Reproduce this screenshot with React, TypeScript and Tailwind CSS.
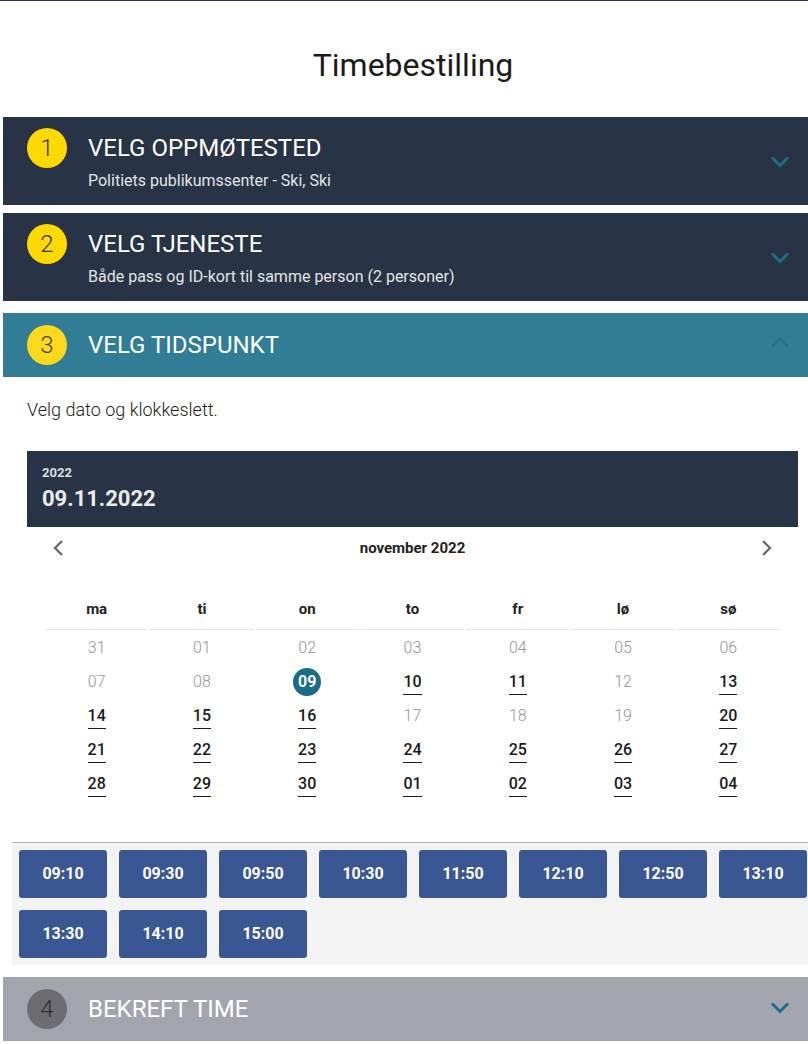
import React from "react";

type Cell = { d: string; s: "g" | "a" | "sel" };

const rows: Cell[][] = [
  [
    { d: "31", s: "g" },
    { d: "01", s: "g" },
    { d: "02", s: "g" },
    { d: "03", s: "g" },
    { d: "04", s: "g" },
    { d: "05", s: "g" },
    { d: "06", s: "g" },
  ],
  [
    { d: "07", s: "g" },
    { d: "08", s: "g" },
    { d: "09", s: "sel" },
    { d: "10", s: "a" },
    { d: "11", s: "a" },
    { d: "12", s: "g" },
    { d: "13", s: "a" },
  ],
  [
    { d: "14", s: "a" },
    { d: "15", s: "a" },
    { d: "16", s: "a" },
    { d: "17", s: "g" },
    { d: "18", s: "g" },
    { d: "19", s: "g" },
    { d: "20", s: "a" },
  ],
  [
    { d: "21", s: "a" },
    { d: "22", s: "a" },
    { d: "23", s: "a" },
    { d: "24", s: "a" },
    { d: "25", s: "a" },
    { d: "26", s: "a" },
    { d: "27", s: "a" },
  ],
  [
    { d: "28", s: "a" },
    { d: "29", s: "a" },
    { d: "30", s: "a" },
    { d: "01", s: "a" },
    { d: "02", s: "a" },
    { d: "03", s: "a" },
    { d: "04", s: "a" },
  ],
];

const days = ["ma", "ti", "on", "to", "fr", "lø", "sø"];
const times = ["09:10", "09:30", "09:50", "10:30", "11:50", "12:10", "12:50", "13:10", "13:30", "14:10", "15:00"];

function Chevron({ up, color }: { up?: boolean; color: string }) {
  return (
    <svg width="20" height="12" viewBox="0 0 20 12" fill="none">
      <polyline
        points={up ? "2,10.5 10,2.5 18,10.5" : "2,1.5 10,9.5 18,1.5"}
        stroke={color}
        strokeWidth="3"
        fill="none"
      />
    </svg>
  );
}

function Circle({ n, bg, fg }: { n: string; bg: string; fg: string }) {
  return (
    <div
      className={`w-[40px] h-[40px] rounded-full flex items-center justify-center text-[24px] font-light shrink-0 ${bg} ${fg}`}
    >
      {n}
    </div>
  );
}

export default function App() {
  return (
    <div
      className="min-h-[1044px] bg-white border-t border-[#2e3044] overflow-hidden"
      style={{ fontFamily: "Roboto, 'Liberation Sans', sans-serif" }}
    >
      <h1 className="text-center text-[32px] leading-[40px] text-[#1a1a1a] font-normal pt-[44px] mb-[32px] pl-[18px]">
        Timebestilling
      </h1>

      <div className="pl-[3px]">
        {/* Panel 1 */}
        <div className="h-[88px] bg-[#283345] flex items-start pl-[24px] pr-[18px] pt-[11px]">
          <Circle n="1" bg="bg-[#fdd900]" fg="text-[#333]" />
          <div className="ml-[21px] flex-1">
            <div className="text-white text-[24px] leading-[40px]">VELG OPPMØTESTED</div>
            <div className="text-[#e4e4e4] text-[16px] leading-[24px] mt-[1px]">
              Politiets publikumssenter - Ski, Ski
            </div>
          </div>
          <div className="self-center -mt-[10px]">
            <Chevron color="#1c6e8e" />
          </div>
        </div>

        {/* Panel 2 */}
        <div className="mt-[8px] h-[88px] bg-[#283345] flex items-start pl-[24px] pr-[18px] pt-[11px]">
          <Circle n="2" bg="bg-[#fdd900]" fg="text-[#333]" />
          <div className="ml-[21px] flex-1">
            <div className="text-white text-[24px] leading-[40px]">VELG TJENESTE</div>
            <div className="text-[#e4e4e4] text-[16px] leading-[24px] mt-[1px]">
              Både pass og ID-kort til samme person (2 personer)
            </div>
          </div>
          <div className="self-center -mt-[10px]">
            <Chevron color="#1c6e8e" />
          </div>
        </div>

        {/* Panel 3 */}
        <div className="mt-[12px] h-[64px] bg-[#327d96] flex items-center pl-[24px] pr-[18px]">
          <Circle n="3" bg="bg-[#fbd81c]" fg="text-[#444]" />
          <div className="ml-[21px] flex-1 text-white text-[24px] leading-[40px]">VELG TIDSPUNKT</div>
          <div className="-mt-[6px]">
            <Chevron up color="#27708c" />
          </div>
        </div>

        {/* Content */}
        <div className="pl-[24px] pr-[10px]">
          <p className="mt-[21px] text-[18px] leading-[24px] font-light text-[#222]">Velg dato og klokkeslett.</p>

          <div className="mt-[29px] h-[76px] bg-[#283345] pl-[15px] pt-[13px]">
            <div className="text-[13px] leading-[18px] font-bold text-[#dedede]">2022</div>
            <div className="mt-[3px] text-[22px] leading-[28px] font-bold text-[#ececec]">09.11.2022</div>
          </div>

          <div className="h-[42px] flex items-center justify-between px-[24px]">
            <svg width="14" height="18" viewBox="0 0 14 18" fill="none">
              <polyline points="11,2 4,9 11,16" stroke="#666" strokeWidth="2.2" fill="none" />
            </svg>
            <div className="text-[15px] font-bold text-[#222]">november 2022</div>
            <svg width="14" height="18" viewBox="0 0 14 18" fill="none">
              <polyline points="3,2 10,9 3,16" stroke="#666" strokeWidth="2.2" fill="none" />
            </svg>
          </div>

          <div className="mt-[21px] px-[17px]">
            <div className="grid grid-cols-7">
              {days.map((d) => (
                <div key={d} className="flex flex-col">
                  <div className="h-[39px] flex items-center justify-center text-[15px] font-bold text-[#222]">
                    {d}
                  </div>
                  <div className="h-[1px] bg-[#e6e6e6] mx-[1px]" />
                </div>
              ))}
            </div>
            <div className="pt-[1px]">
              {rows.map((r, i) => (
                <div key={i} className="grid grid-cols-7">
                  {r.map((c, j) => (
                    <div key={j} className="h-[34px] flex items-center justify-center">
                      {c.s === "sel" ? (
                        <div className="w-[28px] h-[28px] rounded-full bg-[#1b6b8a] text-white text-[16px] font-bold flex items-center justify-center">
                          {c.d}
                        </div>
                      ) : c.s === "a" ? (
                        <span className="inline-block text-[16px] leading-[20px] pb-[2px] font-medium text-[#1a1a1a] border-b border-[#1a1a1a] mt-[3px]">
                          {c.d}
                        </span>
                      ) : (
                        <span className="text-[16px] font-light text-[#959595]">{c.d}</span>
                      )}
                    </div>
                  ))}
                </div>
              ))}
            </div>
          </div>
        </div>

        {/* Time slots */}
        <div className="ml-[9px] mt-[41px] border-t border-[#b3b3bd] bg-[#f3f3f3] pl-[7px] pt-[7px] pb-[7px] flex flex-wrap gap-[12px]">
          {times.map((t) => (
            <div
              key={t}
              className="w-[88px] h-[48px] rounded-[3px] bg-[#3a5794] text-white text-[16px] font-bold flex items-center justify-center"
            >
              {t}
            </div>
          ))}
        </div>

        {/* Panel 4 */}
        <div className="mt-[12px] h-[64px] bg-[#a4a4ae] flex items-center pl-[24px] pr-[18px]">
          <Circle n="4" bg="bg-[#6d6d71]" fg="text-[#2e2e2e]" />
          <div className="ml-[21px] flex-1 text-white text-[24px] leading-[40px]">BEKREFT TIME</div>
          <div className="-mt-[2px]">
            <Chevron color="#1c6e8e" />
          </div>
        </div>
      </div>
    </div>
  );
}
